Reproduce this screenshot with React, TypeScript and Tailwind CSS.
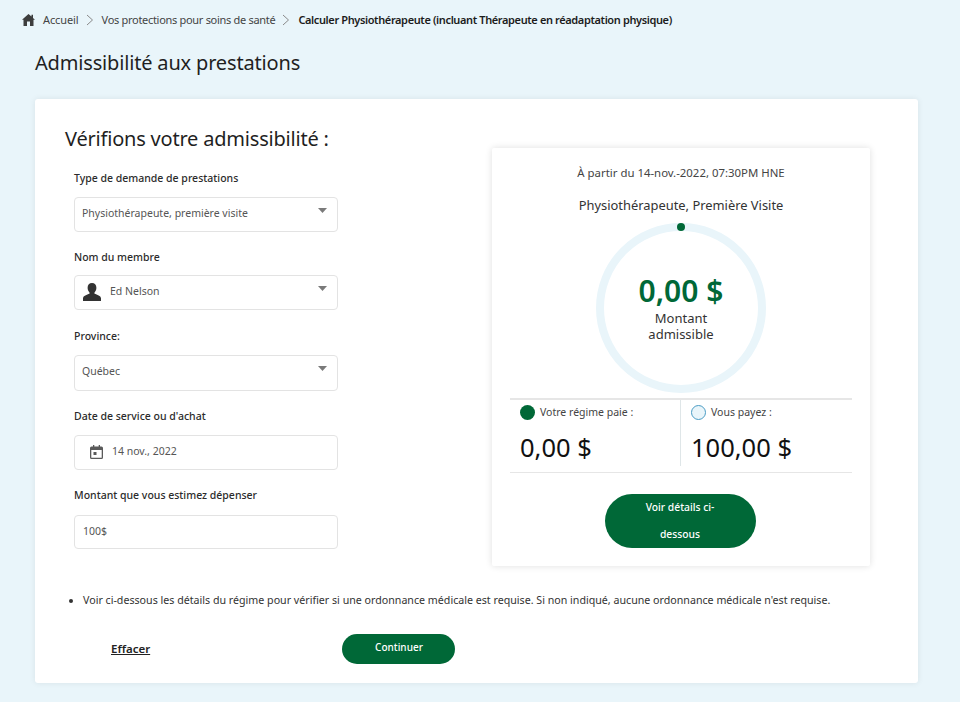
import React from "react";

const Caret = () => (
  <svg width="9" height="5" viewBox="0 0 9 5" className="absolute right-[10px] top-[10px]">
    <path d="M0 0h9L4.500 5z" fill="#7a7a7a" />
  </svg>
);

const Chevron = () => (
  <svg width="8" height="12" viewBox="0 0 8 12" className="mx-[7px]">
    <path d="M1 1l5.500 5-5.500 5" fill="none" stroke="#8a8a8a" strokeWidth="1" />
  </svg>
);

function Field({ label, box, mt, gap, children, caret }: { label: string; box: string; mt: string; gap: string; children: React.ReactNode; caret?: boolean }) {
  return (
    <div className={mt}>
      <div className="text-[10.5px] leading-[14px] text-[#2b2b2b] font-medium">{label}</div>
      <div className={`relative ${gap} w-[264px] ${box} border border-[#e3e3e3] rounded-[4px] bg-white flex items-center text-[10.5px] text-[#555]`}>
        {children}
        {caret && <Caret />}
      </div>
    </div>
  );
}

export default function App() {
  return (
    <div className="w-[960px] h-[702px] overflow-hidden bg-[#e9f5fa] font-['Noto_Sans',sans-serif] text-[#222]">
      <div className="flex items-center pl-[22px] pt-[13px] h-[27px] text-[11px] leading-[14px] tracking-[-0.25px]">
        <svg width="13" height="12" viewBox="0 0 13 12" className="mr-[8px]">
          <path d="M6.500 0 L9.500 2.600 V0.800 H11 V3.900 L13 5.700 H11.500 V12 H8 V7.500 H5 V12 H1.500 V5.700 H0 Z" fill="#3d3d3d" />
        </svg>
        <span className="text-[#444] tracking-[-0.1px]">Accueil</span>
        <Chevron />
        <span className="text-[#444] ml-[1px] tracking-[-0.3px]">Vos protections pour soins de santé</span>
        <Chevron />
        <span className="font-semibold text-[#1c1c1c] ml-[1px] tracking-[-0.38px]">Calculer Physiothérapeute (incluant Thérapeute en réadaptation physique)</span>
      </div>
      <h1 className="ml-[35px] mt-[9px] text-[20px] leading-[54px] h-[54px] text-[#1f1f1f] tracking-[-0.17px]">Admissibilité aux prestations</h1>
      <div className="ml-[35px] mt-[9px] w-[883px] h-[584px] bg-white rounded-[3px] shadow-[0_0_6px_rgba(0,0,0,0.08)]">
        <div className="flex">
          <div className="pl-[30px] w-[457px]">
            <h2 className="mt-[26px] text-[20px] leading-[28px] text-[#1f1f1f] tracking-[-0.2px]">Vérifions votre admissibilité :</h2>
            <div className="pl-[9px]">
              <Field label="Type de demande de prestations" box="h-[35px] pb-[2px]" mt="mt-[18px]" gap="mt-[12px]" caret>
                <span className="pl-[7px]">Physiothérapeute, première visite</span>
              </Field>
              <Field label="Nom du membre" box="h-[35px] pb-[1px]" mt="mt-[18px]" gap="mt-[11px]" caret>
                <svg width="20" height="18" viewBox="0 0 20 18" className="ml-[7px]">
                  <path d="M10 0c2.700 0 4.400 2 4.400 4.800 0 2-.9 3.600-1.900 4.600v1.400c2.600.9 6.300 2 6.500 4.500V18H1v-2.700c.2-2.500 3.900-3.600 6.500-4.500V9.400C6.500 8.400 5.600 6.800 5.600 4.800 5.600 2 7.300 0 10 0z" fill="#333" />
                </svg>
                <span className="ml-[8px]">Ed Nelson</span>
              </Field>
              <Field label="Province:" box="h-[36px] pb-[3px]" mt="mt-[19px]" gap="mt-[12px]" caret>
                <span className="pl-[7px]">Québec</span>
              </Field>
              <Field label="Date de service ou d'achat" box="h-[35px] pb-[2px]" mt="mt-[18px]" gap="mt-[12px]">
                <svg width="13" height="14" viewBox="0 0 13 14" className="ml-[15px]">
                  <path d="M3 0v1.500H1.500A1.500 1.500 0 0 0 0 3v9.500A1.500 1.500 0 0 0 1.500 14h10a1.500 1.500 0 0 0 1.500-1.500V3a1.500 1.500 0 0 0-1.500-1.500H10V0H8.700v1.500H4.300V0zM1.300 5h10.400v7.700H1.300z M3.500 7h3v3h-3z" fill="#5a5a5a" fillRule="evenodd" />
                </svg>
                <span className="ml-[9px]">14 nov., 2022</span>
              </Field>
              <Field label="Montant que vous estimez dépenser" box="h-[34px]" mt="mt-[18px]" gap="mt-[13px]">
                <span className="pl-[8px]">100$</span>
              </Field>
            </div>
          </div>
          <div className="mt-[49px] w-[378px] h-[418px] bg-white shadow-[0_0_7px_rgba(0,0,0,0.13)] rounded-[2px] flex flex-col items-center">
            <div className="mt-[17px] text-[11.4px] leading-[16px] text-[#444]">À partir du 14-nov.-2022, 07:30PM HNE</div>
            <div className="mt-[15px] text-[12.9px] leading-[18px] text-[#333]">Physiothérapeute, Première Visite</div>
            <div className="relative mt-[9px] w-[170px] h-[170px] rounded-full border-[8px] border-[#e9f5fa] flex flex-col items-center">
              <span className="absolute -top-[8px] w-[8px] h-[8px] rounded-full bg-[#006837]" />
              <div className="mt-[40px] text-[30px] leading-[39px] text-[#006837] font-semibold">0,00 $</div>
              <div className="text-[13px] leading-[16px] text-[#333] text-center">Montant<br />admissible</div>
            </div>
            <div className="w-[342px] h-[75px] border-t-2 border-b border-[#e6e6e6] flex mt-[5px]">
              <div className="w-[171px] pl-[10px] pt-[4px] mb-[6px] border-r border-[#dfe6e8]">
                <div className="flex items-center text-[10.5px] leading-[16px] text-[#444]">
                  <span className="w-[15px] h-[15px] rounded-full bg-[#006837] mr-[5px]" />Votre régime paie :
                </div>
                <div className="mt-[10px] text-[25.5px] leading-[34px] text-[#111]">0,00 $</div>
              </div>
              <div className="pl-[10px] pt-[4px]">
                <div className="flex items-center text-[10.5px] leading-[16px] text-[#444]">
                  <span className="w-[15px] h-[15px] rounded-full bg-[#e9f5fa] border border-[#4a9cc4] mr-[5px]" />Vous payez :
                </div>
                <div className="mt-[10px] text-[25.5px] leading-[34px] text-[#111]">100,00 $</div>
              </div>
            </div>
            <div className="mt-[21px] mr-[2px] w-[151px] h-[54px] rounded-full bg-[#006837] text-white text-[10.300px] leading-[27px] text-center px-[36px] font-medium">Voir détails ci-dessous</div>
          </div>
        </div>
        <ul className="mt-[27px] ml-[48px] list-disc text-[10.67px] leading-[14px] text-[#333]">
          <li>Voir ci-dessous les détails du régime pour vérifier si une ordonnance médicale est requise. Si non indiqué, aucune ordonnance médicale n'est requise.</li>
        </ul>
        <div className="flex items-center mt-[27px]">
          <span className="ml-[76px] w-[39px] text-[11.5px] font-semibold underline text-[#222]">Effacer</span>
          <div className="ml-[192px] w-[113px] h-[30px] pb-[3px] pl-[1px] rounded-full bg-[#006837] text-white text-[10px] font-medium flex items-center justify-center">Continuer</div>
        </div>
      </div>
    </div>
  );
}
